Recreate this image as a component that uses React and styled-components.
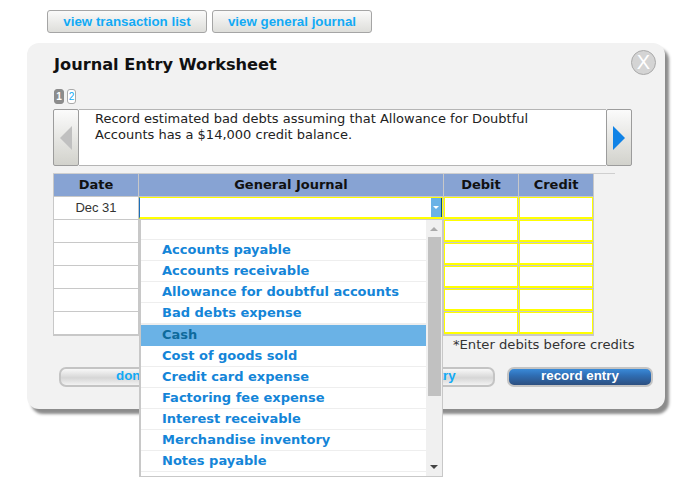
import React from "react";
import styled, { createGlobalStyle } from "styled-components";

const GlobalStyle = createGlobalStyle`
  html, body { margin: 0; padding: 0; background: #fff; }
`;

const Page = styled.div`
  width: 687px;
  height: 500px;
  overflow: hidden;
  padding: 10px 0 0 27px;
  box-sizing: border-box;
  font-family: "DejaVu Sans", Verdana, sans-serif;
`;

const TopBar = styled.div`
  display: flex;
  gap: 5px;
  margin-left: 20px;
  margin-bottom: 10px;
`;

const TopButton = styled.button`
  width: 160px;
  height: 23px;
  padding: 0;
  border: 1px solid #a5a5a5;
  border-radius: 3px;
  background: linear-gradient(#fafafa, #dededa);
  color: #12aaf5;
  font: bold 13.33px "Liberation Sans", Arial, sans-serif;
`;

const Panel = styled.div`
  position: relative;
  width: 638px;
  height: 366px;
  padding: 11px 0 0 26px;
  box-sizing: border-box;
  background: #f2f2f2;
  border-radius: 12px;
  box-shadow: 4px 5px 3px #8c8c8c;
`;

const CloseButton = styled.div`
  position: absolute;
  top: 7px;
  right: 9px;
  width: 23px;
  height: 23px;
  border: 1px solid #aaa;
  border-radius: 50%;
  background: #d4d4d4;
  color: #fff;
  font: 20px/23px "Liberation Sans", Arial, sans-serif;
  text-align: center;
`;

const Title = styled.h2`
  margin: 0 0 0 1px;
  height: 21px;
  font-size: 16.2px;
  line-height: 21px;
  font-weight: bold;
  color: #111;
`;

const Pager = styled.div`
  display: flex;
  gap: 3px;
  margin: 14px 0 5px 1px;
`;

const PageNumber = styled.div`
  width: ${(props) => (props.$active ? "10px" : "9px")};
  height: 15px;
  box-sizing: border-box;
  border-radius: 3px;
  border: 1px solid ${(props) => (props.$active ? "#8c8c8c" : "#aaa")};
  background: ${(props) => (props.$active ? "#8c8c8c" : "#fff")};
  color: ${(props) => (props.$active ? "#fff" : "#12aaf5")};
  font: ${(props) => (props.$active ? "bold" : "normal")} 10px/13px "Liberation Sans", Arial, sans-serif;
  text-align: center;
`;

const Prompt = styled.div`
  display: flex;
  width: 579px;
  height: 57px;
`;

const ArrowButton = styled.div`
  flex: none;
  width: 26px;
  box-sizing: border-box;
  display: flex;
  align-items: center;
  justify-content: center;
  border: 1px solid #9c9c9c;
  border-radius: 2px;
  background: linear-gradient(#fbfbfb, #d2d2cc);
`;

const PromptText = styled.p`
  flex: 1;
  margin: 0;
  padding: 1px 30px 0 16px;
  background: #fff;
  border-top: 1px solid #b5b5b5;
  border-bottom: 1px solid #b5b5b5;
  font-size: 13px;
  line-height: 16px;
  color: #222;
`;

const Rule = styled.div`
  width: 562px;
  height: 1px;
  margin-top: 7px;
  background: #cfcfcf;
`;

const Worksheet = styled.div`
  position: relative;
  width: 541px;
  display: grid;
  grid-template-columns: 85px 305px 75px 75px;
  grid-auto-rows: 23px;
  background: #c8c8c8;
  padding: 0 1px 0 0;
  box-sizing: border-box;
  border-left: 1px solid #c8c8c8;
  border-bottom: 1px solid #c8c8c8;
`;

const HeadCell = styled.div`
  box-sizing: border-box;
  border-right: 1px solid #c8c8c8;
  border-bottom: 1px solid #c8c8c8;
  background: #87a3d3;
  font-size: 13px;
  font-weight: bold;
  line-height: 22px;
  text-align: center;
  color: #111;
`;

const DateCell = styled.div`
  box-sizing: border-box;
  border-right: 1px solid #c8c8c8;
  border-bottom: 1px solid #c8c8c8;
  background: #fff;
  font: 13px/21px "Liberation Sans", Arial, sans-serif;
  text-align: center;
  color: #333;
`;

const InputCell = styled.div`
  position: relative;
  box-sizing: border-box;
  background: #fff;
  border: 1px solid #ffff00;
  border-bottom-width: 2px;
  margin: 0 1px 1px 0;
  ${(props) => props.$focused && "border-left: 1px solid #1d6fb8;"}
`;

const SelectToggle = styled.div`
  position: absolute;
  top: 0;
  right: 0;
  bottom: 0;
  width: 10px;
  background: #6ab2e6;
  border-right: 1px solid #0b4f7a;
  display: flex;
  align-items: center;
  justify-content: center;
  &::after {
    content: "";
    border: 3px solid transparent;
    border-top-color: #fff;
    border-bottom: 0;
  }
`;

const Dropdown = styled.div`
  position: absolute;
  top: 46px;
  left: 85px;
  width: 304px;
  height: 257px;
  box-sizing: border-box;
  display: flex;
  background: #fff;
  border-left: 2px solid #c8c8c8;
  border-right: 1px solid #c8c8c8;
  border-bottom: 1px solid #c8c8c8;
  z-index: 2;
`;

const OptionList = styled.ul`
  flex: 1;
  margin: 0;
  padding: 0;
  list-style: none;
  overflow: hidden;
`;

const Option = styled.li`
  height: ${(props) => (props.$selected ? "22px" : props.$blank ? "20px" : "21px")};
  box-sizing: border-box;
  padding-left: 21px;
  border-top: ${(props) => (props.$selected ? "1px solid #eeeeee" : "0")};
  border-bottom: 1px solid ${(props) => (props.$selected ? "#6ab2e6" : "#eeeeee")};
  background: ${(props) => (props.$selected ? "#6ab2e6" : "#fff")};
  color: ${(props) => (props.$selected ? "#0e6a9c" : "#1485d8")};
  font-size: 13px;
  font-weight: bold;
  line-height: 19px;
`;

const Scrollbar = styled.div`
  flex: none;
  width: 16px;
  background: #f0f0f0;
  display: flex;
  flex-direction: column;
  align-items: center;
  padding: 7px 0 7px;
  box-sizing: border-box;
`;

const ScrollArrow = styled.div`
  width: 0;
  height: 0;
  border-left: 4px solid transparent;
  border-right: 4px solid transparent;
  ${(props) =>
    props.$down ? "border-top: 4px solid #444;" : "border-bottom: 4px solid #aaa;"}
`;

const ScrollTrack = styled.div`
  flex: 1;
  width: 100%;
  margin: 6px 0 5px;
`;

const ScrollThumb = styled.div`
  width: 13px;
  height: 159px;
  margin-left: 2px;
  background: #c1c1c1;
`;

const Note = styled.div`
  margin: 0 0 0 400px;
  height: 18px;
  font-size: 13.15px;
  line-height: 16px;
  padding-top: 1px;
  color: #333;
`;

const ActionBar = styled.div`
  display: flex;
  margin: 12px 0 0 6px;
`;

const ActionButton = styled.button`
  width: ${(props) => props.$width}px;
  margin-right: ${(props) => props.$gap}px;
  height: 20px;
  padding: 0 0 5px;
  border: 2px solid #c4c4c4;
  border-radius: 7px;
  background: linear-gradient(#f8f8f8, #d6d6d6 55%, #f2f2f2);
  color: #12aaf5;
  font: bold 13.33px/14px "Liberation Sans", Arial, sans-serif;
`;

const PrimaryButton = styled(ActionButton)`
  background: linear-gradient(#3a8ad8, #2f6eb4 40%, #2d4f80);
  color: #fff;
`;

const accounts = [
  "Accounts payable",
  "Accounts receivable",
  "Allowance for doubtful accounts",
  "Bad debts expense",
  "Cash",
  "Cost of goods sold",
  "Credit card expense",
  "Factoring fee expense",
  "Interest receivable",
  "Merchandise inventory",
  "Notes payable",
];

const rows = [0, 1, 2, 3, 4, 5];

const App = () => {
  return (
    <Page>
      <GlobalStyle />
      <TopBar>
        <TopButton>view transaction list</TopButton>
        <TopButton>view general journal</TopButton>
      </TopBar>
      <Panel>
        <CloseButton>X</CloseButton>
        <Title>Journal Entry Worksheet</Title>
        <Pager>
          <PageNumber $active>1</PageNumber>
          <PageNumber>2</PageNumber>
        </Pager>
        <Prompt>
          <ArrowButton>
            <svg width="12" height="24" viewBox="0 0 12 24">
              <polygon points="12,0 12,24 0,12" fill="#c0c0c0" />
            </svg>
          </ArrowButton>
          <PromptText>
            Record estimated bad debts assuming that Allowance for Doubtful
            Accounts has a $14,000 credit balance.
          </PromptText>
          <ArrowButton>
            <svg width="12" height="24" viewBox="0 0 12 24">
              <polygon points="0,0 0,24 12,12" fill="#0f82e6" />
            </svg>
          </ArrowButton>
        </Prompt>
        <Rule />
        <Worksheet>
          <HeadCell>Date</HeadCell>
          <HeadCell>General Journal</HeadCell>
          <HeadCell>Debit</HeadCell>
          <HeadCell>Credit</HeadCell>
          {rows.map((row) => (
            <React.Fragment key={row}>
              <DateCell>{row === 0 ? "Dec 31" : ""}</DateCell>
              <InputCell $focused={row === 0}>
                {row === 0 && <SelectToggle />}
              </InputCell>
              <InputCell />
              <InputCell />
            </React.Fragment>
          ))}
          <Dropdown>
            <OptionList>
              <Option $blank />
              {accounts.map((name) => (
                <Option key={name} $selected={name === "Cash"}>
                  {name}
                </Option>
              ))}
            </OptionList>
            <Scrollbar>
              <ScrollArrow />
              <ScrollTrack>
                <ScrollThumb />
              </ScrollTrack>
              <ScrollArrow $down />
            </Scrollbar>
          </Dropdown>
        </Worksheet>
        <Note>*Enter debits before credits</Note>
        <ActionBar>
          <ActionButton $width={146} $gap={144}>done</ActionButton>
          <ActionButton $width={146} $gap={12}>clear entry</ActionButton>
          <PrimaryButton $width={146} $gap={0}>record entry</PrimaryButton>
        </ActionBar>
      </Panel>
    </Page>
  );
};

export default App;
